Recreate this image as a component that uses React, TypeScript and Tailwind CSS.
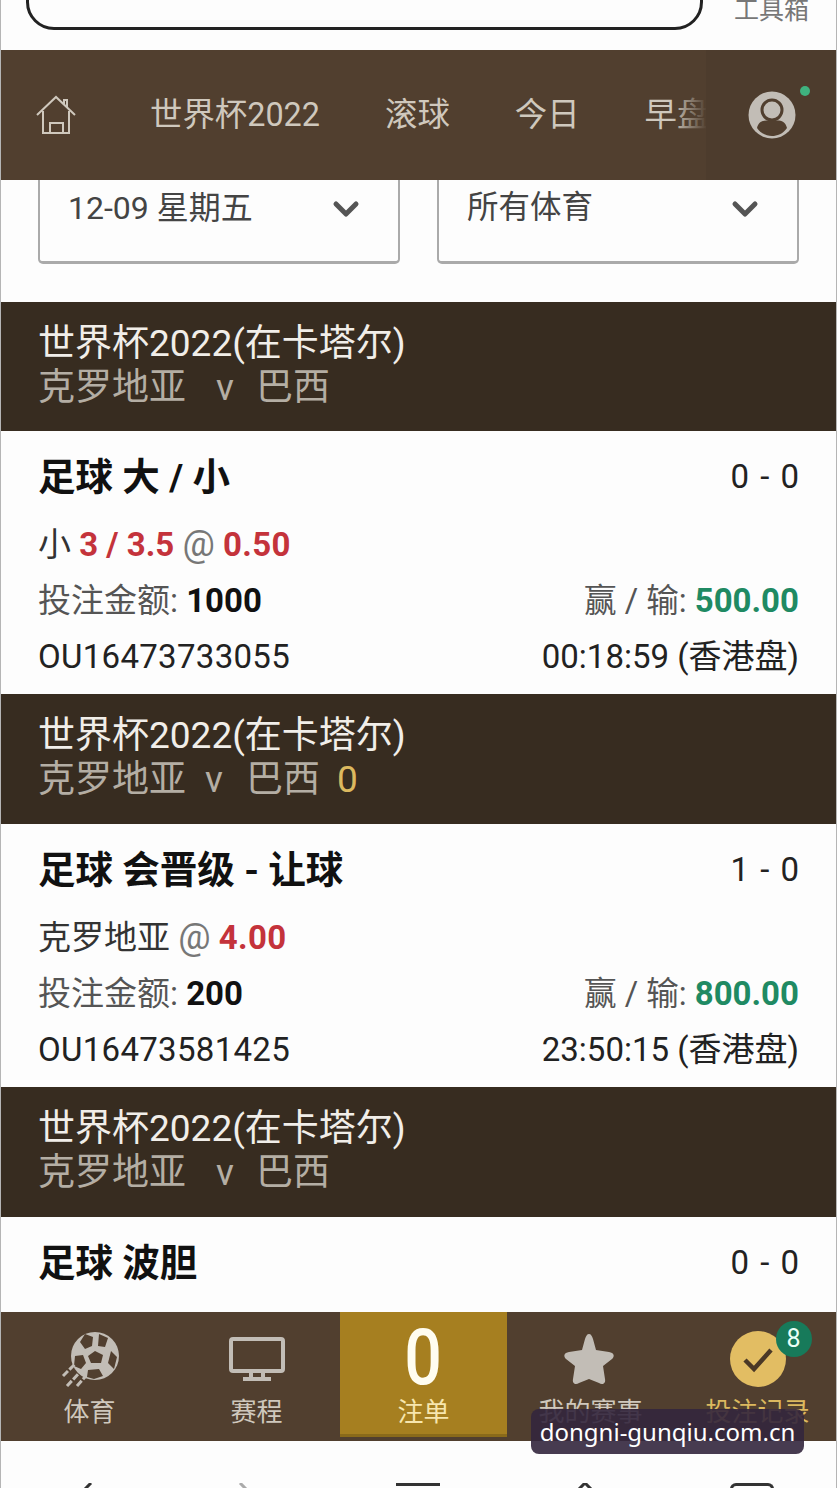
import { ChevronDown } from 'lucide-react'

const font = { fontFamily: '"Roboto", "Noto Sans CJK SC", sans-serif' }

const bets = [
    {
        height: 'h-[129px]',
        vGap: 'ml-[30px] mr-[22px]',
        extra: '',
        title: '足球 大 / 小',
        score: '0 - 0',
        pick: '小',
        line: '3 / 3.5',
        odds: '0.50',
        stake: '1000',
        win: '500.00',
        ref: 'OU16473733055',
        time: '00:18:59 (香港盘)',
    },
    {
        height: 'h-[130px]',
        vGap: 'ml-[19px] mr-[23px]',
        extra: '0',
        title: '足球 会晋级 - 让球',
        score: '1 - 0',
        pick: '克罗地亚',
        line: '',
        odds: '4.00',
        stake: '200',
        win: '800.00',
        ref: 'OU16473581425',
        time: '23:50:15 (香港盘)',
    },
]

function HomeIcon() {
    return (
        <svg width="40" height="40" viewBox="0 0 40 40" fill="none" stroke="#cfc8bd" strokeWidth="2">
            <path d="M1 20 L20 2 L39 20 M28 9 L28 5 L31 5 L31 12" />
            <path d="M7 16 V38 H33 V16" />
            <path d="M14 38 V28 H27 V38" />
        </svg>
    )
}

function UserIcon() {
    return (
        <svg width="48" height="48" viewBox="0 0 48 48">
            <circle cx="24" cy="24" r="23.5" fill="#c2bdb6" />
            <circle cx="24" cy="19" r="10" fill="none" stroke="#513f2f" strokeWidth="3" />
            <path d="M9 37 C11 29 17 29 24 30 C31 29 37 29 39 37 C35 43 29 45 24 45 C19 45 13 43 9 37 Z" fill="#513f2f" />
        </svg>
    )
}

function BallIcon() {
    return (
        <svg width="58" height="56" viewBox="0 0 58 56">
            <circle cx="34" cy="25" r="24" fill="#c2bdb6" />
            <path d="M24 3 L32 6 L31 15 L24 18 L19 11 Z M38 3 L47 7 L44 16 L37 15 Z M34 20 L42 24 L40 32 L30 32 L27 25 Z M14 25 L22 24 L25 32 L20 38 L13 35 Z M50 20 L56 26 L53 38 L47 32 Z M27 39 L38 38 L42 45 L33 48 L26 46 Z" fill="#513f2f" />
            <path d="M2 45 L14 33 M6 55 L20 40 M16 55 L24 46" stroke="#c2bdb6" strokeWidth="3" strokeDasharray="7 2" />
        </svg>
    )
}

function MonitorIcon() {
    return (
        <svg width="56" height="44" viewBox="0 0 56 44" fill="none" stroke="#c2bdb6" strokeWidth="4">
            <rect x="2" y="2" width="52" height="32" rx="2" />
            <path d="M22 34 V41 M34 34 V41" />
            <path d="M14 42 H42" />
        </svg>
    )
}

function StarIcon() {
    return (
        <svg className="-ml-[4px]" width="52" height="52" viewBox="0 0 52 52">
            <path
                d="M26 1 C28 1 29 3 30 6 L33 17 L46 19 C51 20 52 23 49 26 L40 33 L42 46 C43 51 39 52 36 50 L26 46 L16 50 C13 52 9 51 10 46 L12 33 L3 26 C0 23 1 20 6 19 L19 17 L22 6 C23 3 24 1 26 1 Z"
                fill="#c2bdb6"
            />
        </svg>
    )
}

function CheckIcon() {
    return (
        <svg width="56" height="56" viewBox="0 0 56 56">
            <circle cx="28" cy="28" r="28" fill="#e2bd63" />
            <path d="M15 29 L24 38 L41 19" fill="none" stroke="#4a3826" strokeWidth="4.5" />
        </svg>
    )
}

function MatchHeader({ height, vGap, extra }: { height: string; vGap: string; extra: string }) {
    return (
        <div className={`${height} shrink-0 bg-[#372c20] pl-[37px] pt-[20px] text-[37px] leading-[44px]`}>
            <div className="text-[#f1eee9]">世界杯2022(在卡塔尔)</div>
            <div className="flex text-[#b4aea4]">
                <span>克罗地亚</span>
                <span className={vGap}>v</span>
                <span>巴西</span>
                {extra && <span className="ml-[17px] text-[#dcb95f]">{extra}</span>}
            </div>
        </div>
    )
}

function TitleRow({ title, score }: { title: string; score: string }) {
    return (
        <div className="flex items-center justify-between">
            <span className="text-[37.5px] leading-[48px] font-bold text-[#111]">{title}</span>
            <span className="text-[33px] leading-[48px] text-[#222] [word-spacing:3px]">{score}</span>
        </div>
    )
}

function NavItem({ label, children, color }: { label: string; children: React.ReactNode; color: string }) {
    return (
        <div className="flex w-[167px] shrink-0 flex-col items-center pt-[17px]">
            <div className="flex h-[60px] items-center">{children}</div>
            <span className={`mt-[6px] text-[26px] leading-[34px] ${color}`}>{label}</span>
        </div>
    )
}

export default function App() {
    return (
        <div style={font} className="relative flex h-[1488px] w-[837px] flex-col overflow-hidden border-x border-[#b5b5b5] bg-[#fdfdfd]">
            <div className="flex h-[50px] shrink-0 items-start justify-between overflow-hidden pl-[25px] pr-[27px]">
                <div className="-mt-[30px] h-[60px] w-[677px] rounded-[28px] border-[3px] border-[#222]" />
                <span className="-mt-[7px] text-[25px] leading-[36px] text-[#777]">工具箱</span>
            </div>

            <div className="relative flex h-[130px] shrink-0 items-center bg-[#513f2f] pl-[35px]">
                <HomeIcon />
                <div className="ml-[74px] flex w-[556px] gap-[65px] overflow-hidden whitespace-nowrap text-[32.4px] text-[#cfc8bd]">
                    <span>世界杯2022</span>
                    <span>滚球</span>
                    <span>今日</span>
                    <span>早盘</span>
                </div>
                <div className="absolute left-[670px] top-0 h-full w-[36px] bg-gradient-to-r from-transparent to-[#513f2f]" />
                <div className="relative flex h-full flex-1 items-center bg-[#4d3c2d] pl-[42px]">
                    <UserIcon />
                    <span className="absolute left-[94px] top-[36px] h-[10px] w-[10px] rounded-full bg-[#3fb27f]" />
                </div>
            </div>

            <div className="flex h-[122px] shrink-0 items-start gap-[37px] px-[37px]">
                <div className="flex h-[84px] flex-1 items-start justify-between rounded-b-[5px] border-x-2 border-b-[3px] border-[#aaa] pl-[28px] pr-[32px] pt-[8px]">
                    <span className="text-[32px] leading-[40px] text-[#444]">12-09 星期五</span>
                    <ChevronDown className="mt-[1px] h-[40px] w-[40px] text-[#555]" strokeWidth={3} />
                </div>
                <div className="flex h-[84px] flex-1 items-start justify-between rounded-b-[5px] border-x-2 border-b-[3px] border-[#aaa] pl-[28px] pr-[32px] pt-[8px]">
                    <span className="text-[31.5px] leading-[40px] text-[#444]">所有体育</span>
                    <ChevronDown className="mt-[1px] h-[40px] w-[40px] text-[#555]" strokeWidth={3} />
                </div>
            </div>

            {bets.map((bet) => (
                <div key={bet.ref} className="shrink-0">
                    <MatchHeader height={bet.height} vGap={bet.vGap} extra={bet.extra} />
                    <div className="h-[263px] px-[37px] pt-[22px] text-[33px]">
                        <TitleRow title={bet.title} score={bet.score} />
                        <div className="mt-[19px] leading-[48px] text-[#333]">
                            {bet.pick}{' '}
                            {bet.line && <span className="font-bold text-[#c4333b]">{bet.line}</span>}{' '}
                            <span className="text-[36px] text-[#777]">@</span>{' '}
                            <span className="font-bold tracking-[0.4px] text-[#c4333b]">{bet.odds}</span>
                        </div>
                        <div className="mt-[8px] flex justify-between leading-[48px] text-[#555]">
                            <span>
                                投注金额: <span className="font-bold text-[#111]">{bet.stake}</span>
                            </span>
                            <span className="text-[32.6px]">
                                赢 / 输: <span className="text-[33px] font-bold text-[#1f8a63]">{bet.win}</span>
                            </span>
                        </div>
                        <div className="mt-[8px] flex justify-between leading-[48px] text-[#222]">
                            <span className="tracking-[0.3px]">{bet.ref}</span>
                            <span>{bet.time}</span>
                        </div>
                    </div>
                </div>
            ))}

            <MatchHeader height="h-[130px]" vGap="ml-[30px] mr-[22px]" extra="" />
            <div className="h-[95px] shrink-0 overflow-hidden px-[37px] pt-[22px]">
                <TitleRow title="足球 波胆" score="0 - 0" />
            </div>

            <div className="flex h-[129px] shrink-0 overflow-hidden bg-[#513f2f] pl-[5px]">
                <NavItem label="体育" color="text-[#cfc8bd]">
                    <BallIcon />
                </NavItem>
                <NavItem label="赛程" color="text-[#cfc8bd]">
                    <MonitorIcon />
                </NavItem>
                <div className="mb-[4px] flex w-[167px] shrink-0 flex-col items-center border-b-[3px] border-[#8a6a1a] bg-[#a67f20]">
                    <span className="h-[85px] scale-x-[.85] text-[78px] leading-[92px] font-medium text-[#fffdf0]">0</span>
                    <span className="-mt-[2px] text-[26px] leading-[34px] text-[#f7e6ae]">注单</span>
                </div>
                <NavItem label="我的赛事" color="text-[#cfc8bd]">
                    <StarIcon />
                </NavItem>
                <NavItem label="投注记录" color="text-[#dcb95f]">
                    <div className="relative">
                        <CheckIcon />
                        <span className="absolute -right-[26px] -top-[10px] flex h-[36px] w-[36px] items-center justify-center rounded-full bg-[#177a5a] text-[25px] text-[#e9fff6]">
                            8
                        </span>
                    </div>
                </NavItem>
            </div>

            <div className="flex flex-1 items-start justify-around pt-[42px]">
                <svg width="40" height="6" viewBox="0 0 40 6"><path d="M22 6 L28 0" stroke="#333" strokeWidth="3" /></svg>
                <svg width="40" height="6" viewBox="0 0 40 6"><path d="M12 0 L18 6" stroke="#aaa" strokeWidth="3" /></svg>
                <div className="ml-[3px] h-[3px] w-[44px] bg-[#333]" />
                <svg width="40" height="6" viewBox="0 0 40 6"><path d="M14 6 L20 0 L26 6" fill="none" stroke="#333" strokeWidth="3" /></svg>
                <div className="h-[6px] w-[44px] rounded-t-[6px] border-x-[3px] border-t-[3px] border-[#333]" />
            </div>

            <div className="absolute left-[530px] top-[1409px] flex h-[45px] w-[273px] items-center justify-center rounded-[8px] bg-[#33263d]/90 text-[24px] text-white" style={{ fontFamily: '"Noto Sans", sans-serif' }}>
                dongni-gunqiu.com.cn
            </div>
        </div>
    )
}
